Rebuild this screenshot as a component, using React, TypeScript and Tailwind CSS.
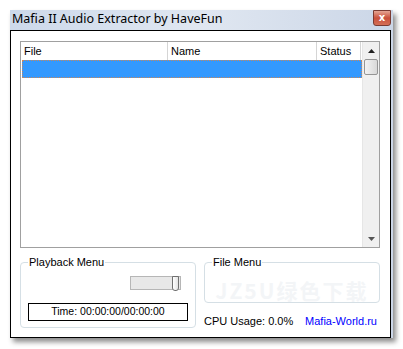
import React from 'react';

const ui = { fontFamily: '"Liberation Sans", Arial, sans-serif' };

function ScrollBar() {
  return (
    <div className="flex w-[17px] flex-col bg-[#f0f0f0] border-l border-[#e6e6e6]">
      <div className="flex h-[17px] items-center justify-center">
        <svg width="7" height="4" viewBox="0 0 7 4">
          <path d="M0 4 L3.5 0 L7 4 Z" fill="#222" />
        </svg>
      </div>
      <div className="mx-[1px] h-[16px] rounded-[2px] border border-[#959595] bg-gradient-to-r from-[#f3f3f3] to-[#d8d8d8]" />
      <div className="flex-1" />
      <div className="flex h-[17px] items-center justify-center">
        <svg width="7" height="4" viewBox="0 0 7 4">
          <path d="M0 0 L3.5 4 L7 0 Z" fill="#555" />
        </svg>
      </div>
    </div>
  );
}

function ListView() {
  return (
    <div className="flex h-[207px] w-[360px] border border-[#a0a0a0] bg-white text-[11px] text-black">
      <div className="flex flex-1 flex-col">
        <div className="flex h-[18px] items-center bg-white">
          <div className="flex h-full w-[147px] items-center border-r border-[#d5d5d5] pl-[3px]">File</div>
          <div className="flex h-full w-[149px] items-center border-r border-[#d5d5d5] pl-[3px]">Name</div>
          <div className="flex h-full w-[44px] items-center border-r border-[#d5d5d5] pl-[3px]">Status</div>
        </div>
        <div className="ml-[1px] h-[18px] border border-dotted border-[#c9875b] bg-[#3399ff]" />
      </div>
      <ScrollBar />
    </div>
  );
}

function GroupBox({ title, className, children }: { title: string; className: string; children?: React.ReactNode }) {
  return (
    <div className={`relative rounded-[4px] border border-[#d5dfe5] ${className}`}>
      {children}
      <span className="absolute left-[7px] top-[-8px] bg-white px-[1px] text-[11px] leading-[14px] text-black">{title}</span>
    </div>
  );
}

export default function App() {
  return (
    <div className="h-[349px] w-[403px] bg-white pl-[10px] pt-[10px]" style={ui}>
      <div className="flex w-[383px] flex-col bg-gradient-to-r from-[#cdd9ea] via-[#e0e7f1] to-[#cbd6e7] pr-[2px] shadow-[3px_4px_5px_rgba(0,0,0,0.45)]">
        <div className="flex h-[20px] items-start justify-between">
          <span className="pl-[2px] pt-[1px] text-[12.5px] leading-[16px] text-black" style={{ fontFamily: '"Noto Sans", "Open Sans", sans-serif' }}>
            Mafia II Audio Extractor by HaveFun
          </span>
          <div className="flex h-[16px] w-[18px] items-center justify-center rounded-b-[3px] border border-[#7a3b33] bg-gradient-to-b from-[#e4a594] via-[#c9503c] to-[#d36e55]">
            <span className="text-[10px] font-bold leading-none text-white" style={{ fontFamily: '"DejaVu Sans", sans-serif' }}>x</span>
          </div>
        </div>
        <div className="flex h-[308px] w-[381px] flex-col border border-black bg-white px-[9px] pt-[10px]">
          <ListView />
          <div className="mt-[14px] flex gap-[8px]">
            <GroupBox title="Playback Menu" className="h-[66px] w-[176px]">
              <div className="flex flex-col items-stretch px-[7px] pt-[13px]">
                <div className="ml-auto mr-[7px] flex h-[14px] w-[51px] items-center justify-end border border-[#b6b6b6] bg-[#e8e8e8]">
                  <div className="mr-[1px] h-[15px] w-[7px] rounded-b-[3px] border border-[#707070] bg-gradient-to-r from-white to-[#e2e2e2]" />
                </div>
                <div className="mt-[13px] flex h-[18px] items-center justify-center border border-black text-[10.5px] text-black">
                  Time: 00:00:00/00:00:00
                </div>
              </div>
            </GroupBox>
            <div className="flex w-[176px] flex-col">
              <GroupBox title="File Menu" className="h-[41px] w-[176px]">
                <div className="flex h-full items-end justify-center pb-[1px] text-[21px] font-bold leading-[22px] tracking-[2px] text-[#f3f5f7]" style={{ fontFamily: '"Noto Sans CJK SC", sans-serif' }}>
                  JZ5U绿色下载
                </div>
              </GroupBox>
              <div className="mt-[11px] flex items-center justify-between pr-[3px] text-[11px] leading-[14px]">
                <span className="text-black">CPU Usage: 0.0%</span>
                <span className="text-[#0000ff]">Mafia-World.ru</span>
              </div>
            </div>
          </div>
        </div>
      </div>
    </div>
  );
}
